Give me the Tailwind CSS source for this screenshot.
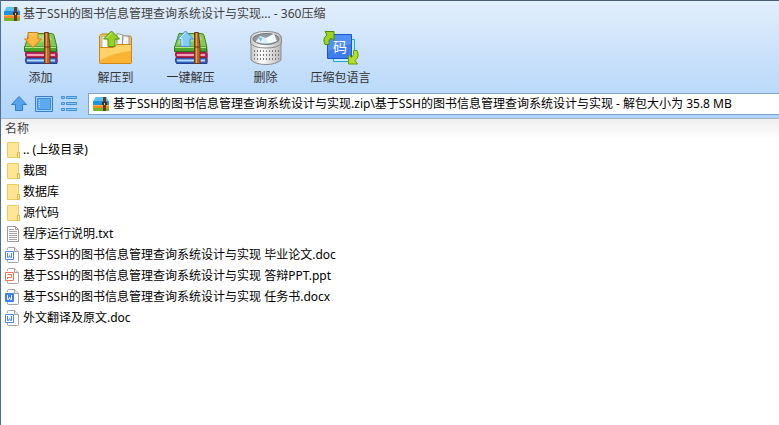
<!DOCTYPE html>
<html lang="zh-CN">
  <head>
    <meta charset="UTF-8" />
    <meta name="viewport" content="width=device-width, initial-scale=1.0" />
    <title>360压缩</title>
    <script src="https://cdn.jsdelivr.net/npm/@tailwindcss/browser@4"></script>
  </head>
  <body
    class="flex flex-col min-h-screen bg-white border-l border-[#4f6f96] font-['Noto_Sans','Noto_Sans_CJK_SC',sans-serif] text-xs text-black whitespace-nowrap overflow-hidden"
  >
    <!-- Shared icons -->
    <svg class="hidden">
      <symbol id="archive" viewBox="0 0 16 14">
        <path d="M2 1q0-1 1-1h10q1 0 1 1l2 4H0z" fill="#5ac3f5" />
        <path d="M0 4h16v4H0z" fill="#2190df" />
        <path d="M0 8h16v3H0z" fill="#f48b1b" />
        <path d="M0 8h16v1H0z" fill="#ffb043" />
        <path d="M0 11h16v2q0 1-1 1H1q-1 0-1-1z" fill="#72b72b" />
        <path d="M10 0h3v14h-3z" fill="#6a3b20" />
        <path d="M9 5h5v3H9z" fill="#4b2a1a" />
        <path d="M11 6h1v2h-1z" fill="#f2c36b" />
      </symbol>
      <symbol id="books" viewBox="0 0 36 36">
        <path d="M3 27.500h29q2 0 2 2v4H3.500q-2-3-.5-6z" fill="#315fc0" stroke="#213f8c" />
        <path d="M4 29.500h28v2H4z" fill="#b5ddff" />
        <path d="M3 22h29q2 0 2 2v3.500H3.500q-2-3-.5-5.500z" fill="#bd285b" stroke="#821b40" />
        <path d="M4 24h28v2H4z" fill="#f2a3b8" />
        <path d="M31 7l3 13v12" fill="none" stroke="#a32648" />
        <path d="M6 3.500h22.500q2 0 2.500 2l3 12H1.500z" fill="#83c957" stroke="#3e871f" />
        <path d="M7 5h20l2 5-24 4z" fill="#a7df7d" />
        <path d="M1.500 17h32v4.500h-32z" fill="#4da62c" stroke="#2d7419" />
        <path d="M2 17.500h31" stroke="#b3e77f" />
        <path d="M21.500 2.500h4l1.500 14v17h-5.500z" fill="#b9692c" stroke="#703711" />
        <path d="M23.500 3v30" stroke="#e5a05d" />
        <path d="M22 17h5" stroke="#703711" />
      </symbol>
      <symbol id="folder" viewBox="0 0 14 16">
        <path d="M.5 .5h11v10h1v5H.5z" fill="#ffe594" stroke="#ecca66" />
        <path d="M10.500 10.500h2v5h-2z" fill="#ffe9a6" stroke="#e3b844" />
      </symbol>
      <symbol id="text-file" viewBox="0 0 14 16">
        <path d="M.5 .5h8l3 3v12H.5z" fill="#fff" stroke="#9a9a9a" />
        <path d="M8.500 .5v3h3" fill="none" stroke="#9a9a9a" />
        <path d="M2 3.500h5M2 5.500h8M2 7.500h8M2 9.500h8M2 11.500h8M2 13.500h8" stroke="#a5a5a5" />
      </symbol>
      <symbol id="page" viewBox="0 0 14 16">
        <path d="M2.500 3V1.500q0-1 1-1h6l4 4v10q0 1-1 1h-9q-1 0-1-1V12" fill="#fff" stroke="#a3a3a3" />
        <path d="M9.500 .5v4h4" fill="#e8e8e8" stroke="#a3a3a3" />
      </symbol>
      <symbol id="doc" viewBox="0 0 14 16">
        <use href="#page" />
        <path d="M.5 4.500h8v8h-8z" fill="#fff" stroke="#4a86ee" />
        <path d="M2.500 6v4.500h1l1-2 1 2h1V6" fill="none" stroke="#4a86ee" />
      </symbol>
      <symbol id="docx" viewBox="0 0 14 16">
        <use href="#page" />
        <rect y="4" width="9" height="9" rx="1" fill="#3f7ff0" />
        <path d="M2.500 6v4.500h1l1-2 1 2h1V6" fill="none" stroke="#fff" />
      </symbol>
      <symbol id="ppt" viewBox="0 0 14 16">
        <use href="#page" />
        <path d="M.5 4.500h8v8h-8z" fill="#fff" stroke="#ee7751" />
        <path d="M2.500 11V9.500h4v-3h-4" fill="none" stroke="#ee7751" />
      </symbol>
    </svg>

    <header
      class="border-t border-[#4a5c78] bg-linear-to-b from-[#e2effc] via-[#c8e0fa] to-[#b0d5fb] border-b border-b-[#a9b5c3] pb-px"
    >
      <!-- Title -->
      <div class="flex items-center h-6 mt-px pl-[3px] gap-[3px] text-[#404040]">
        <svg class="w-4 h-3.5"><use href="#archive" /></svg>
        <h1>基于SSH的图书信息管理查询系统设计与实现... - 360压缩</h1>
      </div>

      <!-- Toolbar -->
      <nav class="flex h-16 pl-0.5 pt-1 text-[#333]">
        <button class="flex flex-col items-center w-[75px] gap-1">
          <svg class="w-9 h-9" viewBox="0 0 36 36">
            <use href="#books" />
            <path d="M5 2.500h10V9h3.500L10 17.500 1.500 9H5z" fill="#fdb943" stroke="#d87c13" />
            <path d="M6.500 4h7" stroke="#ffe29a" />
          </svg>
          添加
        </button>
        <button class="flex flex-col items-center w-[75px] gap-1">
          <svg class="w-9 h-9" viewBox="0 0 36 36">
            <path d="M1.500 6l2-2H14l2 2h16.500l1 2v10h-32z" fill="#efc25c" stroke="#b98324" />
            <path d="M4 7l12-3 5 14H4z" fill="#fff" stroke="#b5b5b5" />
            <path d="M19 3.500l6 1.500-1 13h-5zM25 5.500l6 1v12h-7z" fill="#f5f5f5" stroke="#999" />
            <path d="M1.500 17.500H15l4-3h14.500v18q0 1-1 1h-30q-1 0-1-1z" fill="#fbb334" stroke="#cf8617" />
            <path d="M2 18h13.500l4-3H33v6Q18 22 2 30z" fill="#ffd26a" />
            <path d="M13.500 1l8 8H17v7.500h-7V9H5.500z" fill="#95d31e" stroke="#4f9211" />
            <path d="M13.500 3l-5 5" stroke="#d2f27d" />
          </svg>
          解压到
        </button>
        <button class="flex flex-col items-center w-[75px] gap-1">
          <svg class="w-9 h-9" viewBox="0 0 36 36">
            <use href="#books" />
            <path d="M12.500 1l8 8H17v7.500H8V9H4.500z" fill="#83cbff" stroke="#458fcd" />
            <path d="M12.500 2.500L6.500 8.500H9v7" fill="none" stroke="#dcf2ff" />
          </svg>
          一键解压
        </button>
        <button class="flex flex-col items-center w-[75px] gap-1">
          <svg class="w-9 h-9" viewBox="0 0 36 36">
            <defs>
              <linearGradient id="metal">
                <stop stop-color="#c4c4c4" />
                <stop offset=".35" stop-color="#fff" />
                <stop offset="1" stop-color="#b9b9b9" />
              </linearGradient>
              <pattern id="holes" width="3" height="4" patternUnits="userSpaceOnUse">
                <path d="M0 0h1v2H0z" fill="#777" />
              </pattern>
            </defs>
            <path d="M3 12v18q5 4.500 15 4.500T33 30V12z" fill="url(#metal)" stroke="#8b8b8b" />
            <path d="M5 18q13 5 27 0v11q-13 5-27 0z" fill="url(#holes)" />
            <path d="M2.500 9Q2 1.500 18 1.500T33.500 9v4q-3 5-15.500 5T2.500 13z" fill="url(#metal)" stroke="#888" />
            <ellipse cx="18" cy="9" rx="13" ry="5.500" fill="#8f999f" stroke="#777" />
            <path d="M8 11l4-5 6 2 8-4 3 7q-10 5-21 1z" fill="#d9eefb" />
            <path d="M11 7l5 5-6-1zM18 8l8-4 2 7-8 2z" fill="#f7fcff" />
            <path d="M10 7l4 1-1 4z" fill="#75bde7" />
          </svg>
          删除
        </button>
        <button class="flex flex-col items-center w-[75px] gap-1">
          <svg class="w-9 h-9" viewBox="0 0 36 36">
            <path d="M10.500 9.500h21v22h-21z" fill="#c3edff" stroke="#23a4e9" />
            <path d="M4.500 4.500h24v24h-24z" fill="#3e7df0" stroke="#1b56cb" />
            <path d="M5 5h23v9L5 21z" fill="#5390f6" />
            <text x="17" y="22" text-anchor="middle" font-size="14" fill="#fff">码</text>
            <path d="M2 14.500q-3-6 2-9.500L2 1.500h9v9L8 8q-3 2-2 6.500z" fill="#9bd51d" stroke="#50880d" />
            <path d="M34 20.500q3 6-2 10l2.500 3.500h-9v-9l3 2.500q3-2 2-7z" fill="#b5df22" stroke="#659b0d" />
          </svg>
          压缩包语言
        </button>
      </nav>

      <!-- Address bar -->
      <div class="flex items-center h-[27px] pl-2.5">
        <button aria-label="上级目录">
          <svg class="w-4 h-4" viewBox="0 0 16 16">
            <path d="M8 .5l7.500 8H11.500v6h-7v-6H.5z" fill="#55a3ec" stroke="#327dca" />
          </svg>
        </button>
        <button class="ml-2" aria-label="预览">
          <svg class="w-[18px] h-4" viewBox="0 0 18 16">
            <path d="M.5 .5h17v15H.5z" fill="#a6d4ff" stroke="#3580cf" />
            <path d="M2.500 2.500h13v11h-13z" fill="#5cabf2" stroke="#3e8ddb" />
            <path d="M4.500 4v8" stroke="#b7dcff" stroke-dasharray="1 1" />
          </svg>
        </button>
        <button class="ml-2" aria-label="列表">
          <svg class="w-4 h-4" viewBox="0 0 16 16">
            <path d="M.5 .5h3v2h-3zM.5 6.500h3v2h-3zM.5 12.500h3v2h-3zM5.500 .5h10v2h-10zM5.500 6.500h10v2h-10zM5.500 12.500h10v2h-10z" fill="#8cc5fa" stroke="#418fd5" />
          </svg>
        </button>
        <label
          class="flex grow items-center h-[22px] ml-[11px] pl-1 gap-1 bg-white border border-r-0 border-[#82a3c7]"
        >
          <svg class="w-4 h-3.5"><use href="#archive" /></svg>
          <input
            class="grow outline-none"
            aria-label="路径"
            value="基于SSH的图书信息管理查询系统设计与实现.zip\基于SSH的图书信息管理查询系统设计与实现 - 解包大小为 35.8 MB"
          />
        </label>
      </div>
    </header>

    <!-- File list -->
    <main>
      <table class="w-full text-left">
        <thead class="bg-linear-to-b from-[#eee] to-white">
          <tr class="h-5">
            <th class="pl-1 font-normal text-[#444]">名称</th>
          </tr>
        </thead>
        <tbody>
          <tr class="h-[21px]">
            <td class="pl-1">
              <a href="#" class="flex items-center gap-1"><svg class="w-3.5 h-4 ml-0.5 -mr-0.5"><use href="#folder" /></svg>.. (上级目录)</a>
            </td>
          </tr>
          <tr class="h-[21px]">
            <td class="pl-1">
              <a href="#" class="flex items-center gap-1"><svg class="w-3.5 h-4 ml-0.5 -mr-0.5"><use href="#folder" /></svg>截图</a>
            </td>
          </tr>
          <tr class="h-[21px]">
            <td class="pl-1">
              <a href="#" class="flex items-center gap-1"><svg class="w-3.5 h-4 ml-0.5 -mr-0.5"><use href="#folder" /></svg>数据库</a>
            </td>
          </tr>
          <tr class="h-[21px]">
            <td class="pl-1">
              <a href="#" class="flex items-center gap-1"><svg class="w-3.5 h-4 ml-0.5 -mr-0.5"><use href="#folder" /></svg>源代码</a>
            </td>
          </tr>
          <tr class="h-[21px]">
            <td class="pl-1">
              <a href="#" class="flex items-center gap-1"><svg class="w-3.5 h-4 ml-0.5 -mr-0.5"><use href="#text-file" /></svg>程序运行说明.txt</a>
            </td>
          </tr>
          <tr class="h-[21px]">
            <td class="pl-1">
              <a href="#" class="flex items-center gap-1"><svg class="w-3.5 h-4"><use href="#doc" /></svg>基于SSH的图书信息管理查询系统设计与实现 毕业论文.doc</a>
            </td>
          </tr>
          <tr class="h-[21px]">
            <td class="pl-1">
              <a href="#" class="flex items-center gap-1"><svg class="w-3.5 h-4"><use href="#ppt" /></svg>基于SSH的图书信息管理查询系统设计与实现 答辩PPT.ppt</a>
            </td>
          </tr>
          <tr class="h-[21px]">
            <td class="pl-1">
              <a href="#" class="flex items-center gap-1"><svg class="w-3.5 h-4"><use href="#docx" /></svg>基于SSH的图书信息管理查询系统设计与实现 任务书.docx</a>
            </td>
          </tr>
          <tr class="h-[21px]">
            <td class="pl-1">
              <a href="#" class="flex items-center gap-1"><svg class="w-3.5 h-4"><use href="#doc" /></svg>外文翻译及原文.doc</a>
            </td>
          </tr>
        </tbody>
      </table>
    </main>
  </body>
</html>
